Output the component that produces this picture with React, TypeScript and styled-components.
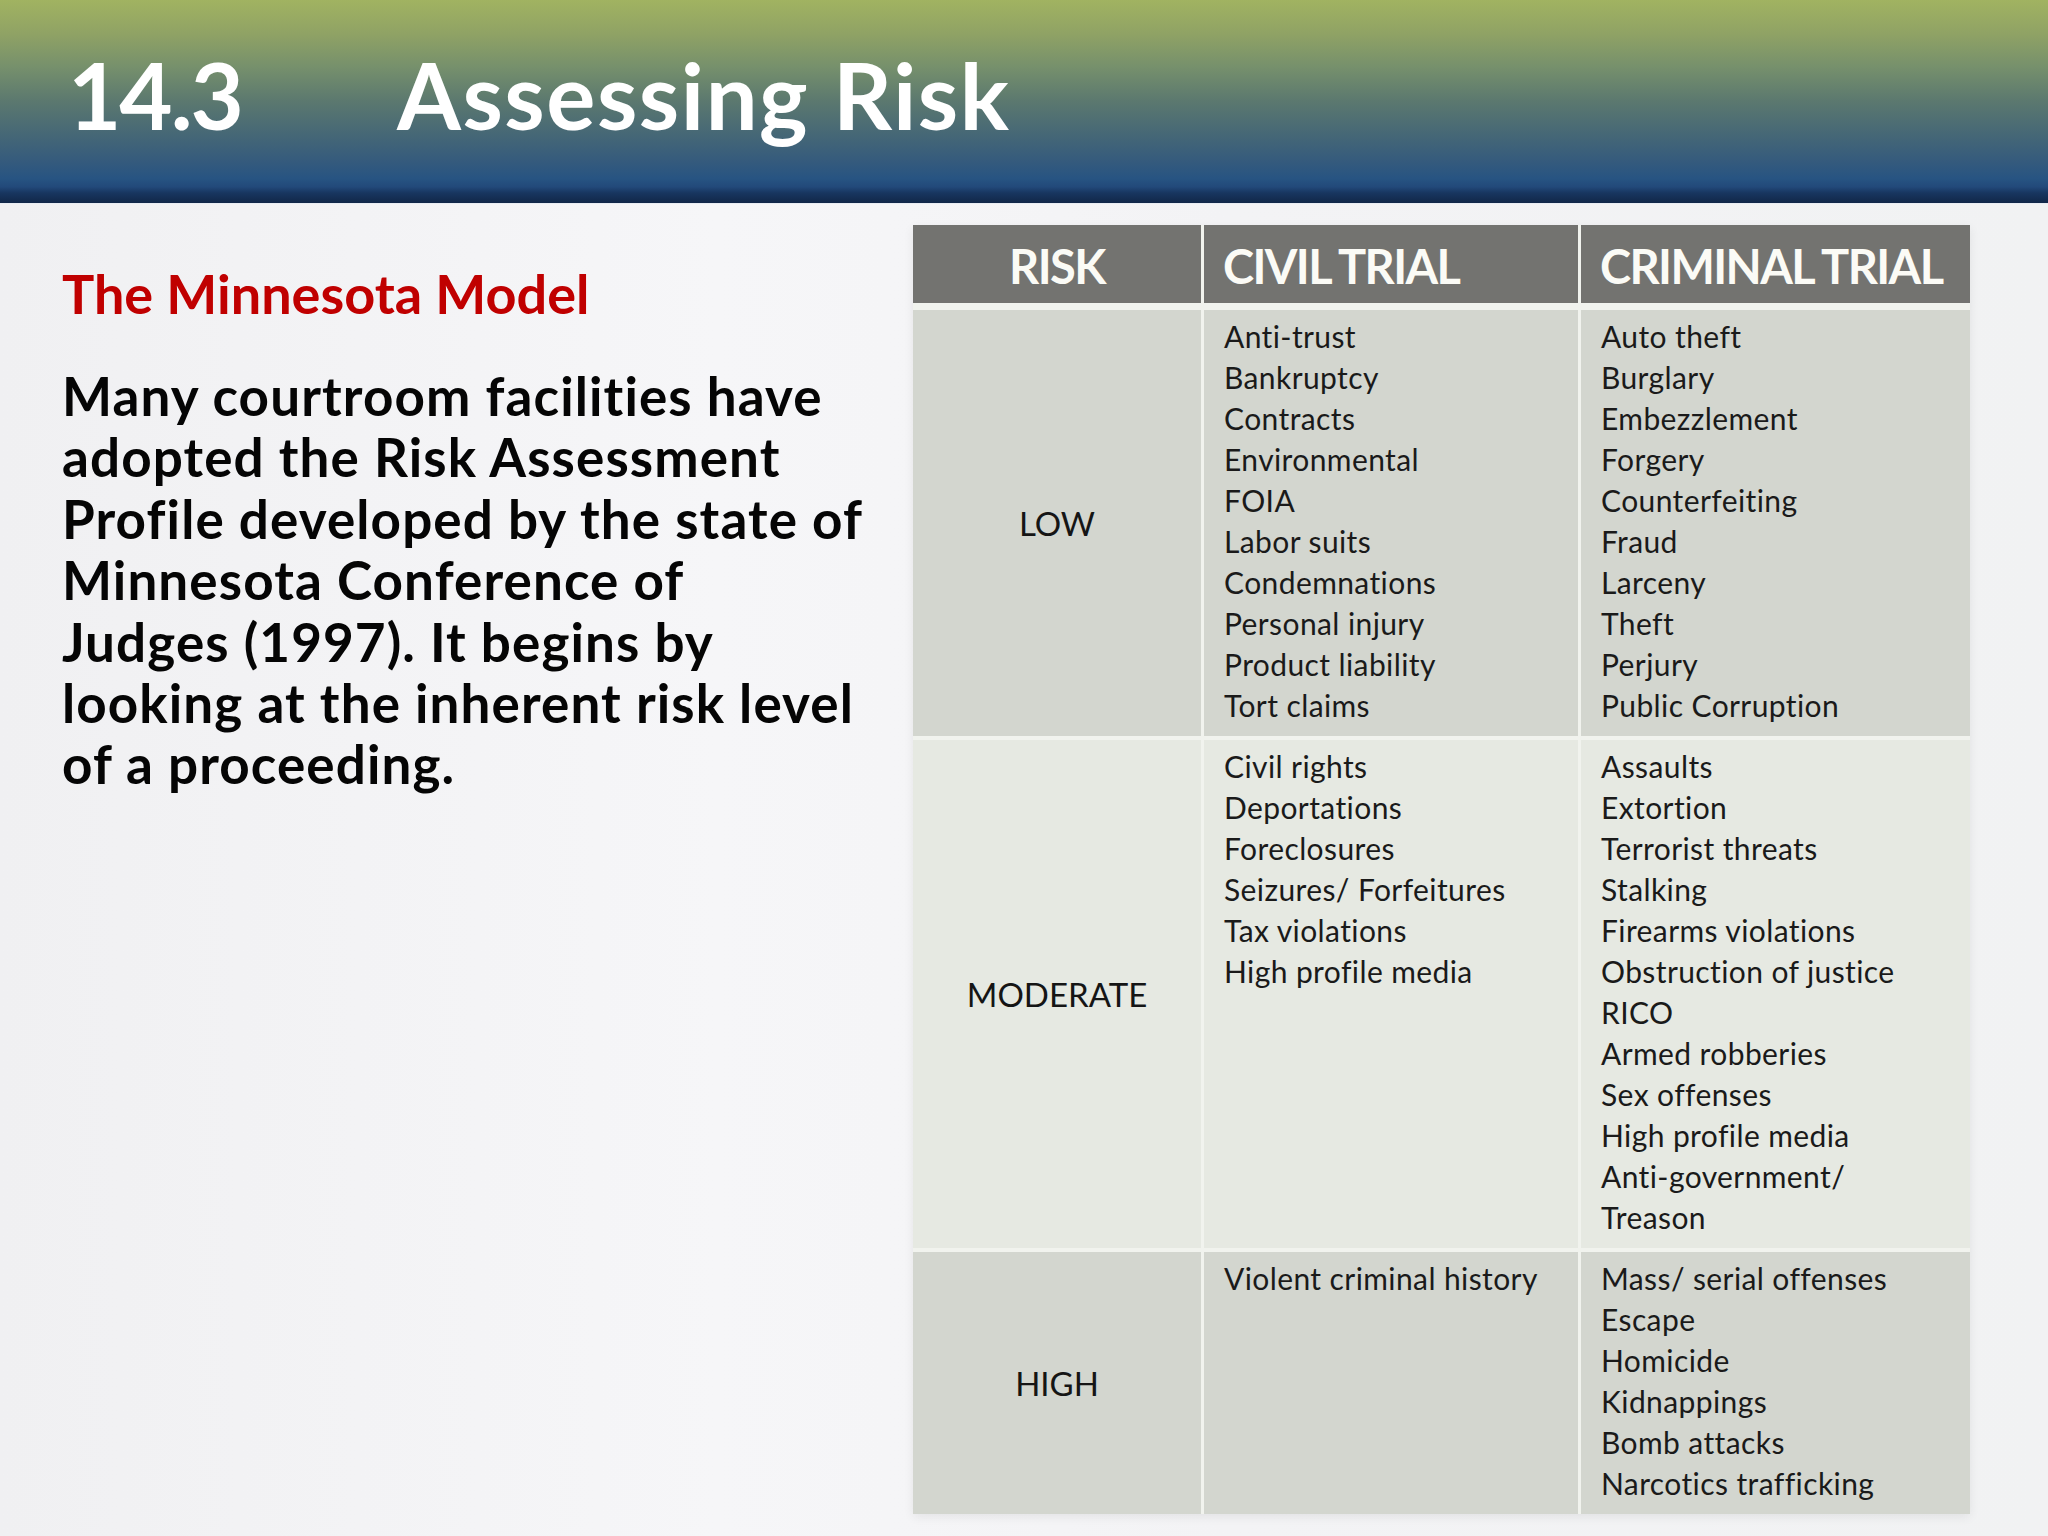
import React from "react";
import styled, { createGlobalStyle } from "styled-components";

const GlobalStyle = createGlobalStyle`
  html, body { margin: 0; padding: 0; }
  body { background: #f3f3f5; }
`;

const Slide = styled.div`
  width: 2048px;
  height: 1536px;
  overflow: hidden;
  display: flex;
  flex-direction: column;
  background: linear-gradient(90deg, #f0f0f2 0%, #f6f6f8 35%, #f3f3f5 60%, #f1f2f3 100%);
  font-family: Lato, "Liberation Sans", sans-serif;
`;

const Header = styled.header`
  height: 204px;
  flex: none;
  box-sizing: border-box;
  padding: 49px 0 0 68px;
  display: flex;
  align-items: flex-start;
  color: #ffffff;
  border-bottom: 1px solid #e8ecf2;
  background: linear-gradient(
    180deg,
    #a1b361 0%,
    #8fa265 17%,
    #76906c 33%,
    #5b786f 50%,
    #466876 66%,
    #345a7d 80%,
    #275482 88%,
    #22497a 92%,
    #183660 95%,
    #112748 100%
  );
`;

const SectionNumber = styled.span`
  min-width: 329px;
  font-size: 92px;
  line-height: 92px;
  font-weight: 700;
  letter-spacing: -2px;
`;

const Title = styled.h1`
  margin: 0;
  font-size: 92px;
  line-height: 92px;
  font-weight: 700;
  letter-spacing: 1.5px;
`;

const Main = styled.main`
  flex: 1;
  display: flex;
  align-items: flex-start;
`;

const TextColumn = styled.section`
  width: 913px;
  flex: none;
  box-sizing: border-box;
  padding: 56px 0 0 62px;
`;

const Subtitle = styled.h2`
  margin: 0;
  font-size: 54px;
  line-height: 68px;
  font-weight: 700;
  color: #c00000;
`;

const Body = styled.p`
  margin: 37px 0 0;
  font-size: 53px;
  line-height: 61.4px;
  font-weight: 700;
  color: #050505;
  letter-spacing: 1.1px;
`;

const Table = styled.div`
  margin-top: 21px;
  width: 1057px;
  display: flex;
  flex-direction: column;
  gap: 4px;
  background: #f1f3ee;
  box-shadow: 0 3px 10px rgba(0, 0, 0, 0.07);
`;

const Row = styled.div<{ $head?: boolean }>`
  display: grid;
  grid-template-columns: 288px 374px 389px;
  column-gap: 3px;
  margin-bottom: ${(p) => (p.$head ? "3px" : "0")};
`;

const HeadCell = styled.div<{ $center?: boolean }>`
  height: 78px;
  box-sizing: border-box;
  display: flex;
  align-items: center;
  justify-content: ${(p) => (p.$center ? "center" : "flex-start")};
  padding-left: ${(p) => (p.$center ? "0" : "19px")};
  padding-top: 4px;
  background: #737370;
  color: #fbfbf6;
  font-size: 47px;
  font-weight: 700;
  letter-spacing: -1.6px;
`;

const LabelCell = styled.div<{ $tone: "dark" | "light" }>`
  display: flex;
  align-items: center;
  justify-content: center;
  background: ${(p) => (p.$tone === "dark" ? "#d3d6cf" : "#e6e9e2")};
  color: #151515;
  font-size: 33px;
`;

const ListCell = styled.ul<{ $tone: "dark" | "light" }>`
  margin: 0;
  list-style: none;
  padding: 6px 10px 10px 20px;
  background: ${(p) => (p.$tone === "dark" ? "#d3d6cf" : "#e6e9e2")};
  color: #1a1a1a;
  font-size: 30px;
  line-height: 41px;
  letter-spacing: 0.4px;
`;

const Item = styled.li`
  white-space: nowrap;
`;

type RiskRow = {
  label: string;
  tone: "dark" | "light";
  civil: string[];
  criminal: string[];
};

const rows: RiskRow[] = [
  {
    label: "LOW",
    tone: "dark",
    civil: [
      "Anti-trust",
      "Bankruptcy",
      "Contracts",
      "Environmental",
      "FOIA",
      "Labor suits",
      "Condemnations",
      "Personal injury",
      "Product liability",
      "Tort claims",
    ],
    criminal: [
      "Auto theft",
      "Burglary",
      "Embezzlement",
      "Forgery",
      "Counterfeiting",
      "Fraud",
      "Larceny",
      "Theft",
      "Perjury",
      "Public Corruption",
    ],
  },
  {
    label: "MODERATE",
    tone: "light",
    civil: [
      "Civil rights",
      "Deportations",
      "Foreclosures",
      "Seizures/ Forfeitures",
      "Tax violations",
      "High profile media",
    ],
    criminal: [
      "Assaults",
      "Extortion",
      "Terrorist threats",
      "Stalking",
      "Firearms violations",
      "Obstruction of justice",
      "RICO",
      "Armed robberies",
      "Sex offenses",
      "High profile media",
      "Anti-government/",
      "Treason",
    ],
  },
  {
    label: "HIGH",
    tone: "dark",
    civil: ["Violent criminal history"],
    criminal: [
      "Mass/ serial offenses",
      "Escape",
      "Homicide",
      "Kidnappings",
      "Bomb attacks",
      "Narcotics trafficking",
    ],
  },
];

export default function App() {
  return (
    <>
      <GlobalStyle />
      <Slide>
        <Header>
          <SectionNumber>14.3</SectionNumber>
          <Title>Assessing Risk</Title>
        </Header>
        <Main>
          <TextColumn>
            <Subtitle>The Minnesota Model</Subtitle>
            <Body>
              Many courtroom facilities have
              <br />
              adopted the Risk Assessment
              <br />
              Profile developed by the state of
              <br />
              Minnesota Conference of
              <br />
              Judges (1997). It begins by
              <br />
              looking at the inherent risk level
              <br />
              of a proceeding.
            </Body>
          </TextColumn>
          <Table>
            <Row $head>
              <HeadCell $center>RISK</HeadCell>
              <HeadCell>CIVIL TRIAL</HeadCell>
              <HeadCell>CRIMINAL TRIAL</HeadCell>
            </Row>
            {rows.map((r) => (
              <Row key={r.label}>
                <LabelCell $tone={r.tone}>{r.label}</LabelCell>
                <ListCell $tone={r.tone}>
                  {r.civil.map((c, i) => (
                    <Item key={i}>{c}</Item>
                  ))}
                </ListCell>
                <ListCell $tone={r.tone}>
                  {r.criminal.map((c, i) => (
                    <Item key={i}>{c}</Item>
                  ))}
                </ListCell>
              </Row>
            ))}
          </Table>
        </Main>
      </Slide>
    </>
  );
}
